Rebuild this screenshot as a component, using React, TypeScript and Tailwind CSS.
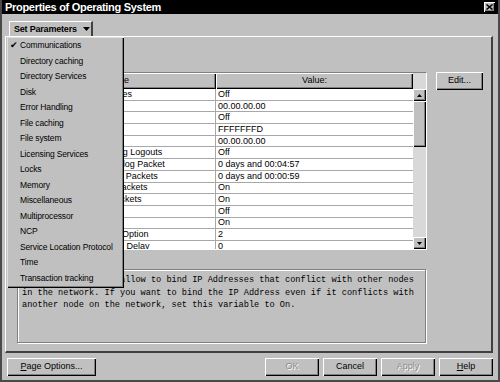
const menuItems = [
  "Communications",
  "Directory caching",
  "Directory Services",
  "Disk",
  "Error Handling",
  "File caching",
  "File system",
  "Licensing Services",
  "Locks",
  "Memory",
  "Miscellaneous",
  "Multiprocessor",
  "NCP",
  "Service Location Protocol",
  "Time",
  "Transaction tracking",
];

const rows = [
  ["Allow IP Address Duplicates", "Off"],
  ["Default Gateway", "00.00.00.00"],
  ["IPX Checksums", "Off"],
  ["Router Mask", "FFFFFFFD"],
  ["Subnet Address", "00.00.00.00"],
  ["Console Display Watchdog Logouts", "Off"],
  ["Delay Before First Watchdog Packet", "0 days and 00:04:57"],
  ["Delay Between Watchdog Packets", "0 days and 00:00:59"],
  ["Reject Bad Component Packets", "On"],
  ["Reject Unknown NCP Packets", "On"],
  ["Allow LIP", "Off"],
  ["Reply to Nearest", "On"],
  ["IPX NetBIOS Replication Option", "2"],
  ["Maximum Packet Receive Delay", "0"],
];

const raised =
  "bg-[#c0c0c0] shadow-[inset_1px_1px_0_#ffffff,inset_-1px_-1px_0_#000000,inset_-2px_-2px_0_#808080]";

const Button = ({ children, disabled, w }: { children: React.ReactNode; disabled?: boolean; w: string }) => (
  <div
    className={`${raised} ${w} h-[18px] flex items-center justify-center text-[9px] ${
      disabled ? "text-[#8a8a8a] [text-shadow:1px_1px_0_#ffffff]" : "text-black"
    }`}
  >
    {children}
  </div>
);

export default function App() {
  return (
    <div className="relative w-[500px] h-[382px] overflow-hidden bg-[#c0c0c0] border-x-2 border-b-2 border-[#4a4a4a] font-['Liberation_Sans',Arial,sans-serif] flex flex-col">
      {/* title bar */}
      <div className="h-[14px] bg-black flex items-center justify-between pl-[3px] pr-[3px] shrink-0">
        <span className="text-white font-bold text-[11px] tracking-[-0.3px] leading-none">
          Properties of Operating System
        </span>
        <div className={`${raised} w-[11px] h-[10px] flex items-center justify-center`}>
          <svg width="7" height="6" viewBox="0 0 7 6">
            <path d="M0.5 0.5 L6.5 5.5 M6.5 0.5 L0.5 5.5" stroke="#000" strokeWidth="1.5" />
          </svg>
        </div>
      </div>

      <div className="pl-[3px] pr-[5px] pt-[7px] flex flex-col">
        {/* tab */}
        <div className="ml-[4px] w-[84px] h-[15px] border-t border-l border-white border-r-2 border-r-[#404040] flex items-center pl-[4px] gap-[6px]">
          <span className="font-bold text-[9px] tracking-[-0.2px] leading-none">Set Parameters</span>
          <svg width="7" height="4" viewBox="0 0 7 4">
            <path d="M0 0 H7 L3.5 4 Z" fill="#000" />
          </svg>
        </div>

        {/* panel */}
        <div className="h-[317px] border-t border-l border-white border-r-2 border-b-2 border-r-[#404040] border-b-[#404040] pt-[35px] pl-[11px] flex flex-col">
          <div className="flex items-start">
            {/* table */}
            <div className="w-[410px] h-[178px] border border-t-[#808080] border-l-[#808080] border-b-white border-r-white flex">
              <div className="w-[395px] flex flex-col">
                <div className="h-[16px] flex shrink-0 text-[9px]">
                  <div className={`${raised} w-[198px] flex items-center justify-center`}>Name</div>
                  <div className={`${raised} w-[197px] flex items-center justify-center`}>Value:</div>
                </div>
                <div className="flex-1 bg-white overflow-hidden">
                  {rows.map(([name, value], i) => (
                    <div key={i} className="h-[11.7px] flex border-b border-[#a8a8a8] text-[9px] leading-none">
                      <div className="w-[198px] border-r border-[#a8a8a8] pl-[2px] flex items-center whitespace-nowrap overflow-hidden">
                        {name}
                      </div>
                      <div className="w-[197px] pl-[2px] flex items-center whitespace-nowrap">{value}</div>
                    </div>
                  ))}
                </div>
              </div>
              {/* scrollbar */}
              <div className="w-[13px] bg-[#d8d8d8] flex flex-col pt-[16px]">
                <div className={`${raised} h-[12px] flex items-center justify-center`}>
                  <svg width="5" height="3" viewBox="0 0 5 3">
                    <path d="M0 3 H5 L2.5 0 Z" fill="#000" />
                  </svg>
                </div>
                <div className={`${raised} h-[46px]`} />
                <div className="flex-1" />
                <div className={`${raised} h-[12px] flex items-center justify-center`}>
                  <svg width="5" height="3" viewBox="0 0 5 3">
                    <path d="M0 0 H5 L2.5 3 Z" fill="#000" />
                  </svg>
                </div>
              </div>
            </div>
            <div className="ml-[9px]">
              <Button w="w-[47px]">Edit...</Button>
            </div>
          </div>

          {/* description */}
          <div className="mt-[19px] w-[409px] h-[74px] border border-[#808080] shadow-[1px_1px_0_#ffffff,inset_1px_1px_0_#ffffff] pl-[4px] pt-[4px] font-['Liberation_Mono','Courier_New',monospace] text-[8.6px] leading-[12.5px] whitespace-pre">
            {"If set to On, will allow to bind IP Addresses that conflict with other nodes\nin the network. If you want to bind the IP Address even if it conflicts with\nanother node on the network, set this variable to On."}
          </div>
        </div>

        {/* bottom buttons */}
        <div className="mt-[5px] flex items-center pl-[2px]">
          <Button w="w-[89px]">
            <span>
              <span className="underline">P</span>age Options...
            </span>
          </Button>
          <div className="flex-1" />
          <div className="flex gap-[4px]">
            <Button w="w-[54px]" disabled>OK</Button>
            <Button w="w-[54px]">Cancel</Button>
            <Button w="w-[54px]" disabled>Apply</Button>
            <Button w="w-[54px]">
              <span>
                <span className="underline">H</span>elp
              </span>
            </Button>
          </div>
        </div>
      </div>

      {/* dropdown menu */}
      <div className="absolute left-[5px] top-[37px] w-[117px] h-[251px] bg-[#c0c0c0] shadow-[inset_1px_1px_0_#dfdfdf,inset_-1px_-1px_0_#000000,inset_-2px_-2px_0_#808080] pt-[1px]">
        {menuItems.map((item, i) => (
          <div key={item} className="h-[15.47px] flex items-center relative pl-[13px] text-[8.5px] tracking-[-0.15px] leading-none whitespace-nowrap">
            {i === 0 && <span className="absolute left-[3px] text-[9px]">✔</span>}
            {item}
          </div>
        ))}
      </div>
    </div>
  );
}
